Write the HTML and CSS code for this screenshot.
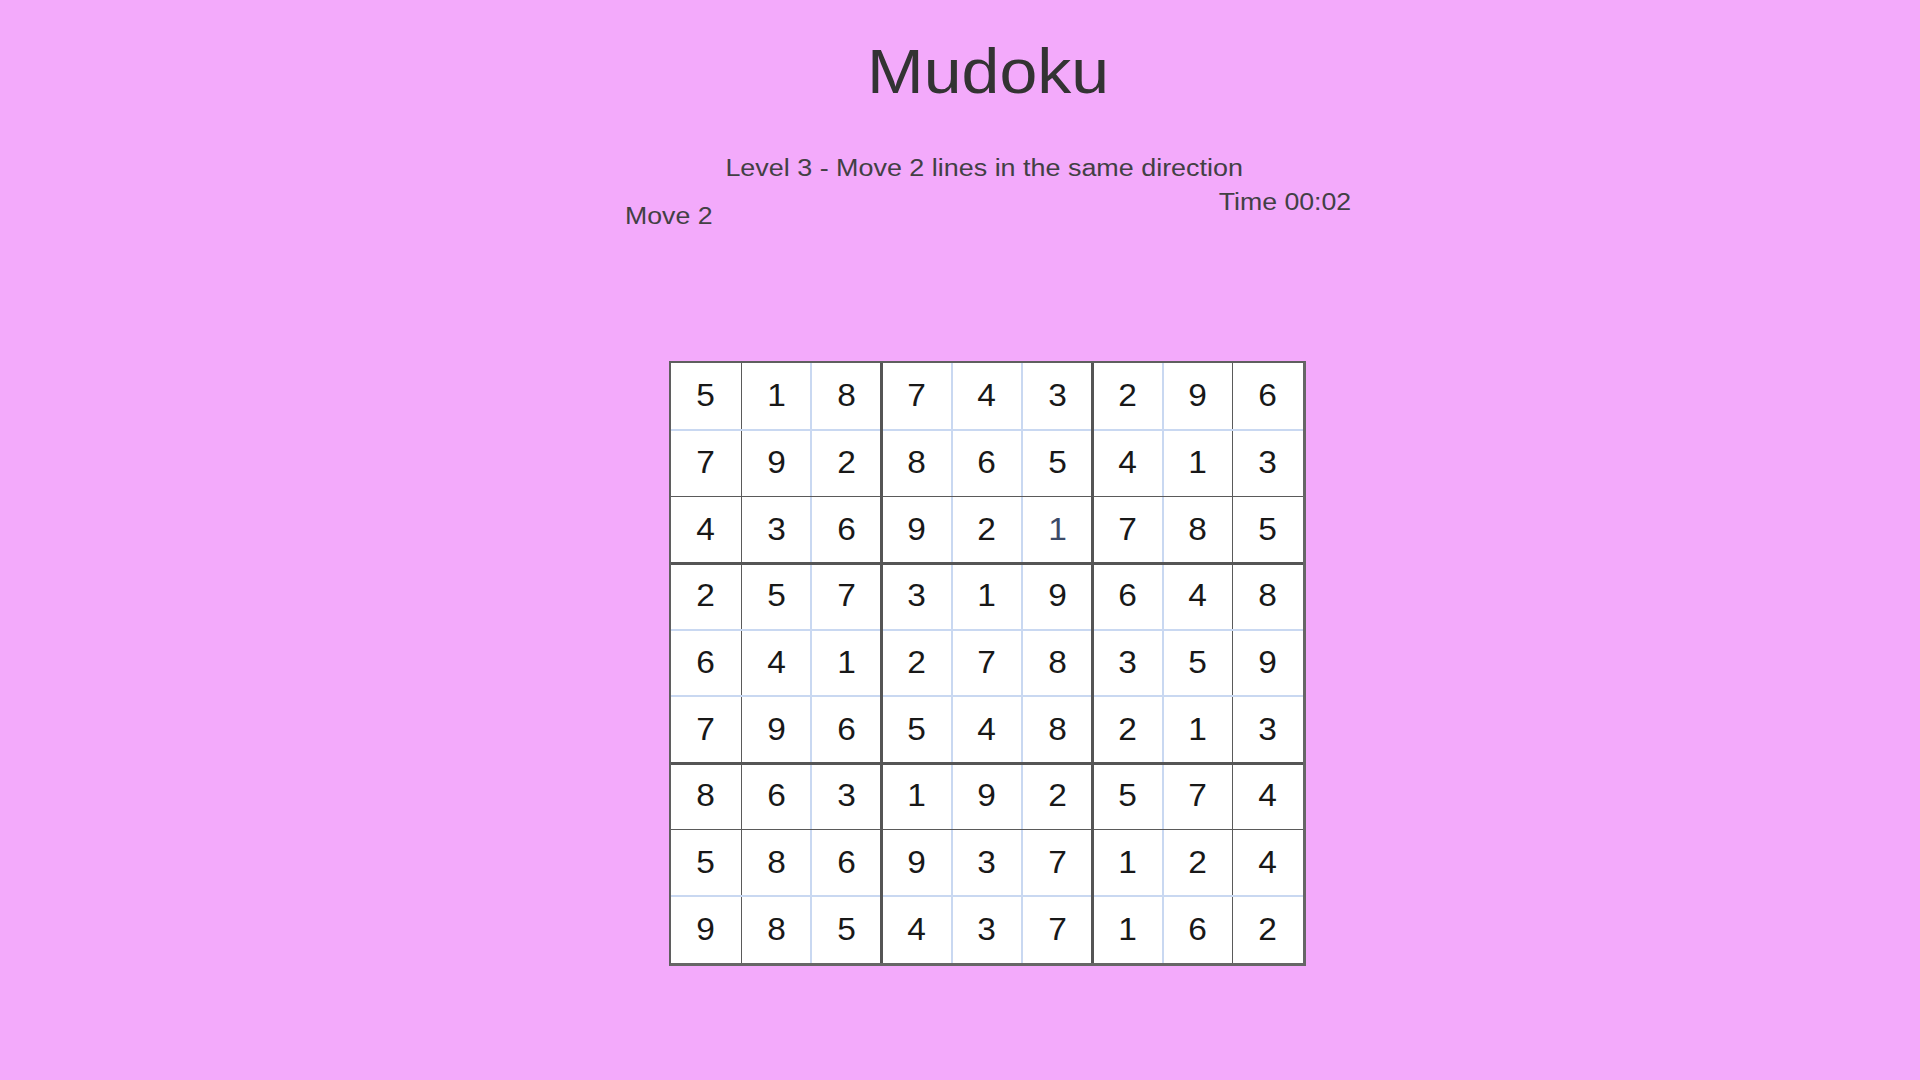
FILE: index.html
```html
<!DOCTYPE html>
<html lang="en">
<head>
<meta charset="utf-8">
<title>Mudoku</title>
<link rel="stylesheet" href="styles.css">
</head>
<body>
<main class="game">
  <h1 class="title"><span>Mudoku</span></h1>
  <p class="level"><span>Level 3 - Move 2 lines in the same direction</span></p>
  <div class="hud">
    <span class="moves">Move 2</span>
    <span class="timer">Time 00:02</span>
  </div>
  <div class="board">
    <div class="cells">
      <div class="cell"><span>5</span></div><div class="cell"><span>1</span></div><div class="cell"><span>8</span></div><div class="cell"><span>7</span></div><div class="cell"><span>4</span></div><div class="cell"><span>3</span></div><div class="cell"><span>2</span></div><div class="cell"><span>9</span></div><div class="cell"><span>6</span></div>
      <div class="cell"><span>7</span></div><div class="cell"><span>9</span></div><div class="cell"><span>2</span></div><div class="cell"><span>8</span></div><div class="cell"><span>6</span></div><div class="cell"><span>5</span></div><div class="cell"><span>4</span></div><div class="cell"><span>1</span></div><div class="cell"><span>3</span></div>
      <div class="cell"><span>4</span></div><div class="cell"><span>3</span></div><div class="cell"><span>6</span></div><div class="cell"><span>9</span></div><div class="cell"><span>2</span></div><div class="cell hint"><span>1</span></div><div class="cell"><span>7</span></div><div class="cell"><span>8</span></div><div class="cell"><span>5</span></div>
      <div class="cell"><span>2</span></div><div class="cell"><span>5</span></div><div class="cell"><span>7</span></div><div class="cell"><span>3</span></div><div class="cell"><span>1</span></div><div class="cell"><span>9</span></div><div class="cell"><span>6</span></div><div class="cell"><span>4</span></div><div class="cell"><span>8</span></div>
      <div class="cell"><span>6</span></div><div class="cell"><span>4</span></div><div class="cell"><span>1</span></div><div class="cell"><span>2</span></div><div class="cell"><span>7</span></div><div class="cell"><span>8</span></div><div class="cell"><span>3</span></div><div class="cell"><span>5</span></div><div class="cell"><span>9</span></div>
      <div class="cell"><span>7</span></div><div class="cell"><span>9</span></div><div class="cell"><span>6</span></div><div class="cell"><span>5</span></div><div class="cell"><span>4</span></div><div class="cell"><span>8</span></div><div class="cell"><span>2</span></div><div class="cell"><span>1</span></div><div class="cell"><span>3</span></div>
      <div class="cell"><span>8</span></div><div class="cell"><span>6</span></div><div class="cell"><span>3</span></div><div class="cell"><span>1</span></div><div class="cell"><span>9</span></div><div class="cell"><span>2</span></div><div class="cell"><span>5</span></div><div class="cell"><span>7</span></div><div class="cell"><span>4</span></div>
      <div class="cell"><span>5</span></div><div class="cell"><span>8</span></div><div class="cell"><span>6</span></div><div class="cell"><span>9</span></div><div class="cell"><span>3</span></div><div class="cell"><span>7</span></div><div class="cell"><span>1</span></div><div class="cell"><span>2</span></div><div class="cell"><span>4</span></div>
      <div class="cell"><span>9</span></div><div class="cell"><span>8</span></div><div class="cell"><span>5</span></div><div class="cell"><span>4</span></div><div class="cell"><span>3</span></div><div class="cell"><span>7</span></div><div class="cell"><span>1</span></div><div class="cell"><span>6</span></div><div class="cell"><span>2</span></div>
    </div>
    <div class="line v v1 thin"></div>
    <div class="line v v2 light"></div>
    <div class="line v v4 light"></div>
    <div class="line v v5 light"></div>
    <div class="line v v7 light"></div>
    <div class="line v v8 thin"></div>
    <div class="line h h1 light"></div>
    <div class="line h h2 thin"></div>
    <div class="line h h4 light"></div>
    <div class="line h h5 light"></div>
    <div class="line h h7 thin"></div>
    <div class="line h h8 light"></div>
    <div class="line v v3 thick"></div>
    <div class="line v v6 thick"></div>
    <div class="line h h3 thick"></div>
    <div class="line h h6 thick"></div>
  </div>
</main>
</body>
</html>
```

FILE: styles.css
```css
* { box-sizing: border-box; }

html, body {
  margin: 0;
  padding: 0;
}

body {
  width: 1920px;
  height: 1080px;
  overflow: hidden;
  background: #f3aafb;
  font-family: "Liberation Sans", Arial, sans-serif;
  color: #424044;
}

.game {
  display: flex;
  flex-direction: column;
  align-items: center;
  padding-left: 56px;
}

.title {
  margin: 40px 0 0;
  font-size: 63px;
  line-height: 63px;
  font-weight: 400;
  color: #333333;
}

.title span,
.level span,
.moves,
.timer {
  display: inline-block;
}

.title span {
  transform: scaleX(1.08);
}

.level {
  margin: 54px 0 0;
  font-size: 23px;
  line-height: 23px;
  margin-left: -7px;
}

.level span {
  transform: scaleX(1.17);
}

.hud {
  width: 726px;
  margin-top: 11px;
  display: flex;
  justify-content: space-between;
  align-items: flex-start;
  font-size: 23px;
  line-height: 23px;
}

.moves {
  margin-top: 14px;
  transform: scaleX(1.16);
  transform-origin: left center;
}

.timer {
  transform: scaleX(1.16);
  transform-origin: right center;
}

.board {
  position: relative;
  width: 637px;
  height: 605px;
  margin-top: 133px;
  margin-left: -1px;
  border: 2px solid #5f5f5f;
  border-right-width: 3px;
  border-bottom-width: 3px;
  border-right-color: #666;
  border-bottom-color: #666;
  background: #ffffff;
}

.cells {
  display: grid;
  grid-template-columns: repeat(9, 1fr);
  grid-template-rows: repeat(9, 1fr);
  width: 100%;
  height: 100%;
}

.cell {
  display: flex;
  align-items: center;
  justify-content: center;
  font-size: 31px;
  color: #181818;
}

.cell span {
  display: inline-block;
  transform: scaleX(1.08);
}

.cell.hint {
  color: #3c4a68;
}

.line {
  position: absolute;
}

.line.v { top: 0; bottom: 0; }
.line.h { left: 0; right: 0; }

.line.thin { background: #5a5a5a; }
.line.v.thin { width: 1px; margin-left: -0.5px; }
.line.h.thin { height: 1px; margin-top: -0.5px; }

.line.light { background: #c9d8f1; }
.line.v.light { width: 2px; margin-left: -1px; }
.line.h.light { height: 2px; margin-top: -1px; }

.line.thick { background: #555555; }
.line.v.thick { width: 3px; margin-left: -1.5px; }
.line.h.thick { height: 3px; margin-top: -1.5px; }

.v1 { left: calc(100% * 1 / 9); }
.v2 { left: calc(100% * 2 / 9); }
.v3 { left: calc(100% * 3 / 9); }
.v4 { left: calc(100% * 4 / 9); }
.v5 { left: calc(100% * 5 / 9); }
.v6 { left: calc(100% * 6 / 9); }
.v7 { left: calc(100% * 7 / 9); }
.v8 { left: calc(100% * 8 / 9); }

.h1 { top: calc(100% * 1 / 9); }
.h2 { top: calc(100% * 2 / 9); }
.h3 { top: calc(100% * 3 / 9); }
.h4 { top: calc(100% * 4 / 9); }
.h5 { top: calc(100% * 5 / 9); }
.h6 { top: calc(100% * 6 / 9); }
.h7 { top: calc(100% * 7 / 9); }
.h8 { top: calc(100% * 8 / 9); }
```
